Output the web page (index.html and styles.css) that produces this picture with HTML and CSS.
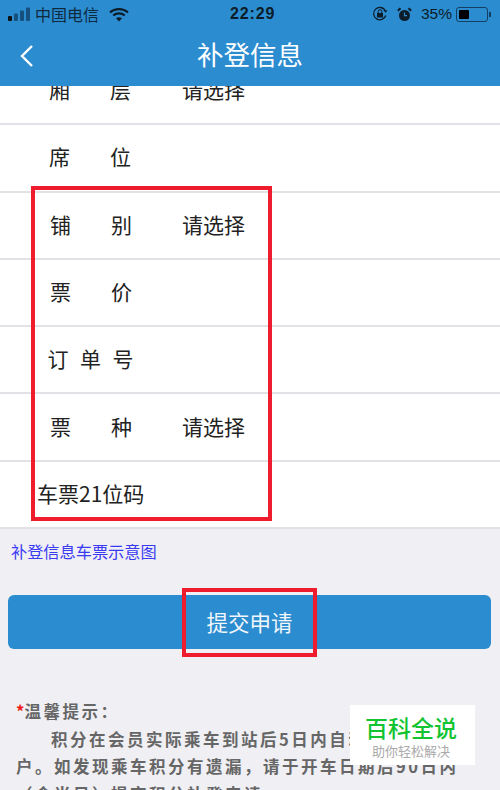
FILE: index.html
```html
<!DOCTYPE html>
<html lang="zh">
<head>
<meta charset="utf-8">
<title>补登信息</title>
<link rel="stylesheet" href="styles.css">
</head>
<body>
<div class="page">
  <header class="top">
    <div class="status">
      <div class="status-left">
        <svg class="signal" width="23" height="14" viewBox="0 0 23 14"><rect x="0" y="9" width="4" height="5" rx="1" fill="#111"/><rect x="6" y="6.500" width="4" height="7.500" rx="1" fill="#15507f"/><rect x="12" y="3.500" width="4" height="10.500" rx="1" fill="#15507f"/><rect x="18" y="0.500" width="4" height="13.500" rx="1" fill="#15507f"/></svg>
        <span class="carrier">中国电信</span>
        <svg class="wifi" width="20" height="15" viewBox="0 0 20 15"><path d="M1 5.500C6 1 14 1 19 5.500" fill="none" stroke="#0c1c28" stroke-width="2.200"/><path d="M4.200 8.500C7.500 5.700 12.500 5.700 15.800 8.500" fill="none" stroke="#0c1c28" stroke-width="2.200"/><path d="M7 11.300C8.800 9.900 11.200 9.900 13 11.300L10 14.500Z" fill="#0c1c28"/></svg>
      </div>
      <span class="time">22:29</span>
      <div class="status-right">
        <svg class="lock" width="16" height="16" viewBox="0 0 16 16"><path d="M13.800 9.500A6.200 6.200 0 1 1 13.300 4.600" fill="none" stroke="#0c1c28" stroke-width="1.300"/><path d="M11.500 5.800h4l-2-2.600z" fill="#0c1c28" transform="rotate(180 13.500 5)"/><rect x="5" y="7" width="6" height="4.500" fill="#0c1c28"/><path d="M6.200 7V5.500a1.800 1.800 0 0 1 3.600 0V7" fill="none" stroke="#0c1c28" stroke-width="1"/></svg>
        <svg class="alarm" width="15" height="15" viewBox="0 0 15 15"><circle cx="7.500" cy="8.500" r="5.500" fill="#0c1c28"/><path d="M7.500 5.500v3.200h2.500" fill="none" stroke="#2b8cd0" stroke-width="1.200"/><path d="M0.800 3.800L3.500 1.200M14.200 3.800L11.500 1.200" stroke="#0c1c28" stroke-width="2"/></svg>
        <span class="pct">35%</span>
        <div class="battery"><div class="battery-fill"></div></div>
        <div class="battery-tip"></div>
      </div>
    </div>
    <div class="nav">
      <svg class="back" width="16" height="24" viewBox="0 0 16 24"><path d="M13 2L3 12l10 10" fill="none" stroke="#fff" stroke-width="2.400"/></svg>
      <h1 class="title">补登信息</h1>
    </div>
  </header>
  <main class="scroll">
    <section class="list">
      <div class="row"><span class="label wide">厢层</span><span class="value">请选择</span></div>
      <div class="row"><span class="label wide">席位</span></div>
      <div class="row"><span class="label wide shift">铺别</span><span class="value">请选择</span></div>
      <div class="row"><span class="label wide shift">票价</span></div>
      <div class="row"><span class="label mid">订单号</span></div>
      <div class="row"><span class="label wide shift">票种</span><span class="value">请选择</span></div>
      <div class="row"><span class="label tight">车票21位码</span></div>
    </section>
    <a class="link">补登信息车票示意图</a>
    <div class="submit">提交申请</div>
    <section class="tips">
      <p class="tip-head"><span class="star">*</span>温馨提示：</p>
      <p class="tip-body">积分在会员实际乘车到站后5日内自动存入会员账户。如发现乘车积分有遗漏，请于开车日期后90日内（含当日）提交积分补登申请。</p>
    </section>
  </main>
  <div class="mark mark-rows"></div>
  <div class="mark mark-btn"></div>
  <div class="brand">
    <span class="brand-name">百科全说</span>
    <span class="brand-sub">助你轻松解决</span>
  </div>
</div>
</body>
</html>
```

FILE: styles.css
```css
* { box-sizing: border-box; margin: 0; padding: 0; }
html, body { width: 500px; height: 790px; overflow: hidden; }
body { font-family: "Noto Sans CJK SC", "Liberation Sans", sans-serif; background: #efeff4; }
.page { position: relative; width: 500px; height: 790px; display: flex; flex-direction: column; overflow: hidden; }

.top { height: 86px; flex: none; background: #2b8cd0; position: relative; z-index: 1; }
.status { height: 28px; display: flex; align-items: center; justify-content: space-between; padding: 0 9px 0 8px; color: #0c1c28; position: relative; }
.status-left, .status-right { display: flex; align-items: center; }
.carrier { font-size: 16px; margin-left: 4px; line-height: 28px; color: #0f2a3f; }
.wifi { margin-left: 10px; }
.time { position: absolute; left: 230px; top: 0; font-family: "Liberation Sans", sans-serif; font-size: 16px; line-height: 28px; font-weight: 700; letter-spacing: 0.900px; }
.lock { margin-right: 9px; }
.alarm { margin-right: 9px; }
.pct { font-family: "Liberation Sans", sans-serif; font-size: 15.500px; line-height: 28px; margin-right: 4px; }
.battery { width: 32px; height: 15px; border: 1px solid #123f62; border-radius: 3px; padding: 2px; }
.battery-fill { width: 10px; height: 100%; background: #000; border-radius: 1px; }
.battery-tip { width: 2px; height: 5px; background: #123f62; margin-left: 1px; }

.nav { height: 58px; position: relative; display: flex; align-items: center; justify-content: center; }
.back { position: absolute; left: 19px; top: 16px; }
.title { font-size: 26.500px; font-weight: 400; color: #fff; line-height: 1; margin-top: -6px; }

.scroll { flex: 1; min-height: 0; overflow: hidden; }
.list { margin-top: -28px; background: #fff; }
.row { height: 67.300px; border-bottom: 2px solid #e2e2e6; padding-bottom: 3px; display: flex; align-items: center; position: relative; font-size: 21px; color: #222; }
.label { display: block; }
.wide { width: 82px; margin-left: 49px; text-align-last: justify; }
.shift { margin-left: 50px; }
.mid { width: 86px; margin-left: 47.500px; text-align-last: justify; }
.tight { margin-left: 37px; font-size: 21px; }
.value { margin-left: 51px; }
.shift + .value { margin-left: 50px; }

.link { display: block; margin: 12px 0 0 11px; font-size: 16.200px; line-height: 20px; color: #3a3af2; }
.submit { margin: 34px 9px 0 8px; height: 54px; border-radius: 6px; background: #2b8cd0; color: #f2f7fb; font-size: 21.500px; padding-bottom: 2px; display: flex; align-items: center; justify-content: center; }

.tips { margin: 49px 0 0 16px; width: 452px; color: #666; font-size: 16.500px; font-weight: 700; letter-spacing: 2.500px; line-height: 27.500px; }
.star { color: #f01818; letter-spacing: 0; }
.tip-body { text-indent: 35px; }

.mark { position: absolute; border: 4px solid #ee1c2c; pointer-events: none; }
.mark-rows { left: 31px; top: 186px; width: 241px; height: 335px; }
.mark-btn { left: 182px; top: 588px; width: 135px; height: 69px; }

.brand { position: absolute; left: 350px; top: 705px; width: 125px; height: 60px; background: #fff; display: flex; flex-direction: column; align-items: center; padding: 8px 3px 0 0; z-index: 2; }
.brand-name { font-size: 23px; line-height: 28px; color: #12c432; font-weight: 500; }
.brand-sub { font-size: 13px; line-height: 17px; color: #aaa; margin-top: 1px; }
```
